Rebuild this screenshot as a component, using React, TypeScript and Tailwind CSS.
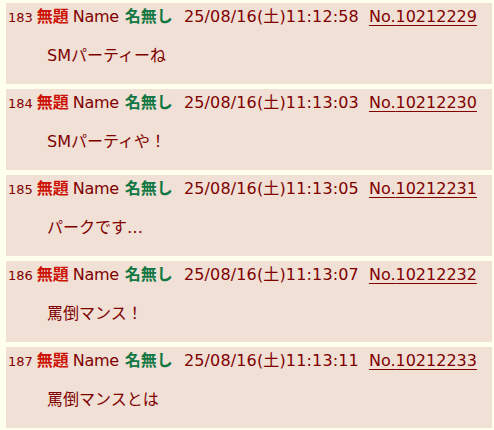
import React from "react";

const posts = [
  { num: 183, date: "25/08/16(土)11:12:58", no: "10212229", body: "SMパーティーね" },
  { num: 184, date: "25/08/16(土)11:13:03", no: "10212230", body: "SMパーティや！" },
  { num: 185, date: "25/08/16(土)11:13:05", no: "10212231", body: "パークです…" },
  { num: 186, date: "25/08/16(土)11:13:07", no: "10212232", body: "罵倒マンス！" },
  { num: 187, date: "25/08/16(土)11:13:11", no: "10212233", body: "罵倒マンスとは" },
];

function Post({ num, date, no, body }: any) {
  return (
    <div className="bg-[#f0e0d6] h-[81px] pt-[3px] pl-[2px]">
      <div className="flex items-baseline whitespace-nowrap text-[#800000] text-[16px] leading-[22px]">
        <span className="text-[13px]">{num}</span>
        <span className="ml-[4px] font-bold text-[#cc1105]">無題</span>
        <span className="ml-[4px] tracking-[-0.3px]">Name</span>
        <span className="ml-[6px] font-bold text-[#117743]">名無し</span>
        <span className="ml-[11px] tracking-[0.15px]">{date}</span>
        <span className="ml-[10px] underline underline-offset-[3px]">No.{no}</span>
      </div>
      <div className="ml-[39px] mt-[16px] text-[16px] leading-[22px] text-[#800000]">{body}</div>
    </div>
  );
}

export default function App() {
  return (
    <div
      className="min-h-[430px] bg-[#ffffee] pt-[3px] pl-[6px] pr-[2px] flex flex-col gap-[5px]"
      style={{ fontFamily: '"DejaVu Sans", "Noto Sans CJK JP", sans-serif' }}
    >
      {posts.map((p) => (
        <Post key={p.num} {...p} />
      ))}
    </div>
  );
}
